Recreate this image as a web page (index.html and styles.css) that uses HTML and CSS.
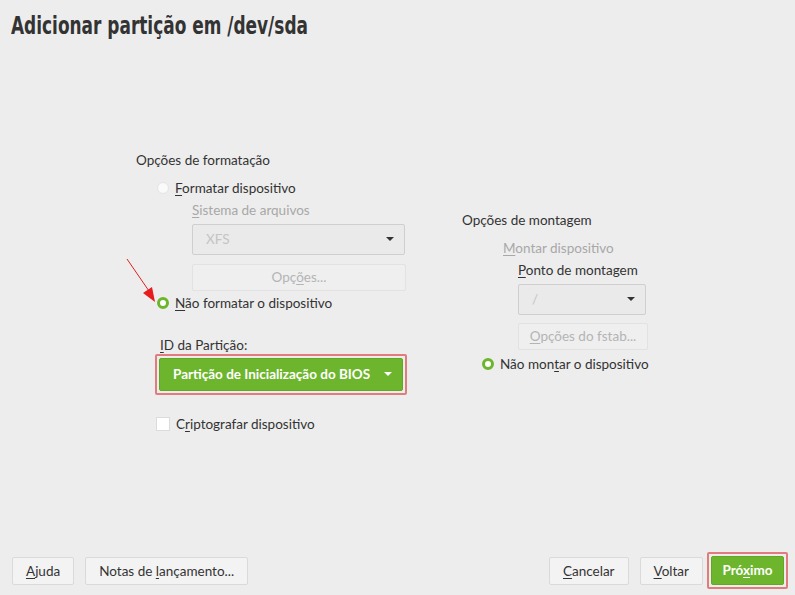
FILE: index.html
```html
<!DOCTYPE html>
<html lang="pt-BR">
<head>
<meta charset="UTF-8">
<title>Adicionar partição</title>
<link rel="stylesheet" href="styles.css">
</head>
<body>
<div class="window">
  <h1 class="title"><span>Adicionar partição em /dev/sda</span></h1>

  <div class="content">
    <!-- formatação -->
    <div class="col col-left">
      <div class="group-label">Opções de formatação</div>
      <div class="indent">
        <label class="radio"><span class="dot"></span><span><u>F</u>ormatar dispositivo</span></label>
        <div class="sub">
          <div class="field-label disabled"><u>S</u>istema de arquivos</div>
          <div class="combo disabled"><span>XFS</span><span class="caret"></span></div>
          <div class="btn disabled wide">Opç<u>õ</u>es...</div>
        </div>
        <label class="radio checked"><span class="dot"></span><span><u>N</u>ão formatar o dispositivo</span></label>
      </div>
      <div class="partid">
        <div class="field-label"><u>I</u>D da Partição:</div>
        <div class="hl">
          <div class="combo green"><span>Partição de Inicialização do BIOS</span><span class="caret"></span></div>
        </div>
      </div>
      <label class="check"><span class="box"></span><span>C<u>r</u>iptografar dispositivo</span></label>
    </div>

    <!-- montagem -->
    <div class="col col-right">
      <div class="group-label">Opções de montagem</div>
      <div class="mount">
        <div class="mount-opt disabled"><u>M</u>ontar dispositivo</div>
        <div class="sub2">
          <div class="field-label"><u>P</u>onto de montagem</div>
          <div class="combo disabled small"><span>/</span><span class="caret"></span></div>
          <div class="btn disabled small"><u>O</u>pções do fstab...</div>
        </div>
      </div>
      <label class="radio checked"><span class="dot"></span><span>Não mon<u>t</u>ar o dispositivo</span></label>
    </div>
  </div>

  <div class="footer">
    <div class="btn"><u>A</u>juda</div>
    <div class="btn">Notas de <u>l</u>ançamento...</div>
    <div class="spacer"></div>
    <div class="btn"><u>C</u>ancelar</div>
    <div class="btn"><u>V</u>oltar</div>
    <div class="hl">
      <div class="btn primary">Pró<u>x</u>imo</div>
    </div>
  </div>

  <!-- seta vermelha -->
  <svg class="arrow" width="40" height="50" viewBox="0 0 40 50">
    <line x1="2" y1="2" x2="24" y2="34" stroke="#e02020" stroke-width="1"/>
    <polygon points="30,45 18,36 27,30" fill="#e81c1c"/>
  </svg>
</div>
</body>
</html>
```

FILE: styles.css
```css
html, body {
margin: 0;
padding: 0;
height: 100%;
}
body {
background: #ededed;
font-family: "Lato", "Open Sans", sans-serif;
font-size: 13.5px;
color: #333;
}
u { text-decoration: underline; text-underline-offset: 2px; }

.window {
position: relative;
width: 795px;
height: 595px;
display: flex;
flex-direction: column;
}
.title {
margin: 0;
padding: 12px 0 0 11px;
font-family: "DejaVu Sans Condensed", "DejaVu Sans", sans-serif;
font-size: 24px;
font-weight: 700;
color: #333;
white-space: nowrap;
}
.title span {
display: inline-block;
transform: scaleX(0.785);
transform-origin: left center;
}

.content {
flex: 1;
display: flex;
align-items: center;
padding: 0 0 0 136px;
gap: 56px;
margin-top: -9px;
}
.col-left { width: 270px; }
.group-label { margin-bottom: 12px; }
.indent { padding-left: 27px; }
.sub { padding-left: 29px; margin: 6px 0 4px; }
.field-label { margin-bottom: 6px; }
.disabled { color: #a8a8a8; }

.radio, .check {
display: flex;
align-items: center;
gap: 6px;
cursor: default;
}
.radio .dot {
width: 12px; height: 12px;
border-radius: 50%;
background: #fafafa;
box-sizing: border-box;
border: 1px solid #e4e4e4;
margin-left: -6px;
}
.radio.checked .dot {
background: #fff;
border: 3px solid #6db52c;
}
.check .box {
width: 12px; height: 12px;
background: #fff;
border: 1px solid #dcdcdc;
margin-left: -1px;
}

.combo {
display: flex;
align-items: center;
justify-content: space-between;
box-sizing: border-box;
height: 31px;
width: 213px;
padding: 0 10px 0 13px;
background: #eaeaea;
border: 1px solid #cfcfcf;
border-radius: 2px;
}
.combo.disabled { color: #c4c4c4; }
.caret {
width: 0; height: 0;
border-left: 4px solid transparent;
border-right: 4px solid transparent;
border-top: 4px solid #333;
}
.combo.small { width: 128px; }

.btn {
display: block;
box-sizing: border-box;
height: 27px;
line-height: 25px;
padding: 0 12px;
text-align: center;
white-space: nowrap;
background: #f3f3f3;
border: 1px solid #dadada;
border-radius: 2px;
color: #333;
}
.btn.disabled { color: #b4b4b4; background: #efefef; border-color: #e2e2e2; }
.btn.wide { width: 214px; margin-top: 9px; }
.btn.small { width: 130px; margin-top: 8px; padding: 0; }

.partid { margin: 26px 0 21px 24px; }
.partid .field-label { margin-bottom: 1px; }
.hl {
display: inline-block;
padding: 2px;
border: 2px solid #e27c7c;
border-radius: 2px;
margin-left: -5px;
}
.combo.green {
width: 244px;
height: 33px;
background: #6db52c;
border: 1px solid #62a825;
color: #fff;
font-weight: 700;
padding: 0 10px 0 13px;
}
.combo.green .caret { border-top-color: #fff; }
.col-left .check { padding-left: 21px; }

.col-right { width: 200px; }
.mount { padding-left: 41px; margin-top: 12px; }
.mount-opt { margin-bottom: 6px; }
.sub2 { padding-left: 15px; }
.sub2 .field-label { margin-bottom: 6px; }
.col-right .radio { padding-left: 26px; margin-top: 6px; }

.footer {
display: flex;
align-items: center;
gap: 11px;
padding: 0 7px 6px 12px;
}
.footer .btn { height: 28px; line-height: 26px; padding: 0 13px; }
.spacer { flex: 1; }
.footer .hl { margin-left: -7px; }
.footer .btn.primary {
background: #6db52c;
border-color: #62a825;
color: #fff;
font-weight: 700;
width: 73px;
height: 29px;
line-height: 27px;
padding: 0;
}

.arrow {
position: absolute;
left: 125px;
top: 257px;
}
```
